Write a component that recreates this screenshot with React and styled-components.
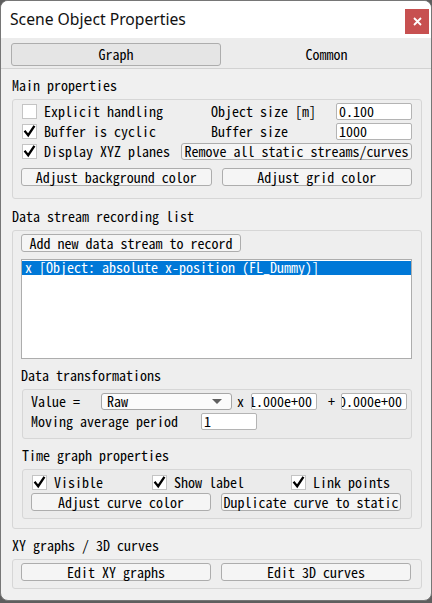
import React from "react";
import styled, { createGlobalStyle } from "styled-components";

const GlobalStyle = createGlobalStyle`
  html, body {
    margin: 0;
    padding: 0;
    background: #5e5e5e;
  }
  * {
    box-sizing: border-box;
  }
`;

const MONO = `"Noto Sans Mono CJK SC", "Liberation Mono", monospace`;

const Window = styled.div`
  width: 432px;
  height: 601px;
  border: 1px solid #767676;
  border-radius: 8px;
  overflow: hidden;
  background: #f0f0f0;
  display: flex;
  flex-direction: column;
  font-family: ${MONO};
  font-size: 14px;
  color: #000;
`;

const TitleBar = styled.div`
  height: 37px;
  background: #fff;
  display: flex;
  align-items: flex-start;
  justify-content: space-between;
  padding-left: 9px;
`;

const Title = styled.span`
  font-family: "Noto Sans", "Open Sans", sans-serif;
  font-size: 15.7px;
  line-height: 36px;
  color: #111;
`;

const CloseButton = styled.div`
  width: 24px;
  height: 25px;
  margin-top: 8px;
  margin-right: 2px;
  background: #c75050;
  display: flex;
  align-items: center;
  justify-content: center;
`;

const TabBar = styled.div`
  height: 31px;
  background: #ececec;
  border-bottom: 1px solid #d2d2d2;
  display: grid;
  grid-template-columns: 210px 1fr;
  gap: 1px;
  padding: 5px 0 2px 10px;
`;

const Tab = styled.div`
  height: 23px;
  line-height: 21px;
  text-align: center;
  border: 1px solid ${(p) => (p.$active ? "#adadad" : "transparent")};
  border-radius: 3px;
  background: ${(p) => (p.$active ? "#e5e5e5" : "transparent")};
`;

const Body = styled.div`
  flex: 1;
  padding: 0 9px 0 11px;
  display: flex;
  flex-direction: column;
`;

const SectionLabel = styled.div`
  height: 14px;
  line-height: 14px;
  margin-top: ${(p) => p.$top ?? 9}px;
  margin-bottom: 7px;
  margin-left: ${(p) => p.$indent ?? 0}px;
  white-space: pre;
`;

const Group = styled.div`
  border: 1px solid #d6d6d6;
  border-radius: 3px;
  background: ${(p) => (p.$nested ? "#ebebeb" : "rgba(0,0,0,0.008)")};
  padding: ${(p) => p.$pad};
  margin-left: ${(p) => p.$left ?? 0}px;
`;

const PropGrid = styled.div`
  display: grid;
  grid-template-columns: 160px 155px 76px;
  grid-auto-rows: 17px;
  row-gap: 3px;
`;

const CheckCell = styled.label`
  display: flex;
  align-items: center;
  gap: 7px;
  padding-left: 1px;
  white-space: pre;
  line-height: 17px;
`;

const Box = styled.span`
  width: 15px;
  height: 15px;
  flex: none;
  background: #fff;
  border: 1px solid #c4c4c4;
  display: flex;
  align-items: center;
  justify-content: center;
`;

const FieldLabel = styled.span`
  padding-left: ${(p) => p.$pad ?? 0}px;
  line-height: 17px;
  white-space: pre;
  width: ${(p) => (p.$width ? `${p.$width}px` : "auto")};
  flex: none;
`;

const Input = styled.div`
  height: 17px;
  width: ${(p) => (p.$width ? `${p.$width}px` : "auto")};
  background: #fff;
  border: 1px solid #b4b4b4;
  border-radius: 2px;
  padding-left: 2px;
  line-height: 15px;
  white-space: pre;
  overflow: ${(p) => (p.$clip ? "hidden" : "visible")};
  text-indent: ${(p) => p.$indent ?? 0}px;
  flex: none;
`;

const Button = styled.div`
  height: ${(p) => p.$h ?? 18}px;
  width: ${(p) => (p.$width ? `${p.$width}px` : "auto")};
  grid-column: ${(p) => p.$span ?? "auto"};
  background: #f5f5f5;
  border: 1px solid #adadad;
  border-radius: 3px;
  text-align: center;
  line-height: ${(p) => (p.$h ?? 18) - 2}px;
  white-space: pre;
`;

const ButtonPair = styled.div`
  display: grid;
  grid-template-columns: ${(p) => p.$cols ?? "1fr 1fr"};
  column-gap: 10px;
  margin-top: ${(p) => p.$top ?? 0}px;
`;

const List = styled.div`
  margin-top: 7px;
  height: 100px;
  background: #fff;
  border: 1px solid #adadad;
  padding-top: 1px;
`;

const ListRow = styled.div`
  height: 14px;
  line-height: 12px;
  padding-left: 3px;
  background: ${(p) => (p.$selected ? "#0078d7" : "transparent")};
  color: ${(p) => (p.$selected ? "#fff" : "#000")};
  white-space: pre;
`;

const Row = styled.div`
  display: flex;
  align-items: center;
  height: 17px;
  margin-top: ${(p) => p.$top ?? 0}px;
`;

const Combo = styled.div`
  width: 131px;
  height: 17px;
  border: 1px solid #a6a6a6;
  border-radius: 3px;
  background: #fbfbfb;
  display: flex;
  align-items: center;
  justify-content: space-between;
  padding: 0 9px 0 5px;
  line-height: 15px;
  flex: none;
`;

const Arrow = styled.span`
  width: 0;
  height: 0;
  border-left: 5px solid transparent;
  border-right: 5px solid transparent;
  border-top: 5px solid #5f5f5f;
`;

const CheckRow = styled.div`
  display: grid;
  grid-template-columns: 120px 139px 1fr;
  height: 17px;
`;

const Check = () => (
  <svg width="13" height="13" viewBox="0 0 13 13">
    <path d="M2.3 6.6 L5.2 10.2 L10.8 1.8" fill="none" stroke="#000" strokeWidth="2.3" strokeLinecap="square" />
  </svg>
);

const CheckBox = ({ checked, label }) => (
  <CheckCell>
    <Box>{checked && <Check />}</Box>
    {label}
  </CheckCell>
);

export default function App() {
  return (
    <>
      <GlobalStyle />
      <Window>
        <TitleBar>
          <Title>Scene Object Properties</Title>
          <CloseButton>
            <svg width="9" height="9" viewBox="0 0 9 9">
              <path d="M1 1 L8 8 M8 1 L1 8" stroke="#fff" strokeWidth="1.8" />
            </svg>
          </CloseButton>
        </TitleBar>
        <TabBar>
          <Tab $active>Graph</Tab>
          <Tab>Common</Tab>
        </TabBar>
        <Body>
          <SectionLabel>Main properties</SectionLabel>
          <Group $pad="3px 9px 12px 8px">
            <PropGrid>
              <CheckBox label="Explicit handling" />
              <FieldLabel $pad={30}>Object size [m]</FieldLabel>
              <Input>0.100</Input>
              <CheckBox checked label="Buffer is cyclic" />
              <FieldLabel $pad={30}>Buffer size</FieldLabel>
              <Input>1000</Input>
              <CheckBox checked label="Display XYZ planes" />
              <Button $span="2 / 4" $h={17}>Remove all static streams/curves</Button>
            </PropGrid>
            <ButtonPair $top={8}>
              <Button>Adjust background color</Button>
              <Button>Adjust grid color</Button>
            </ButtonPair>
          </Group>

          <SectionLabel $top={10}>Data stream recording list</SectionLabel>
          <Group $pad="3px 9px 9px 8px">
            <Button $width={220}>Add new data stream to record</Button>
            <List>
              <ListRow $selected>x [Object: absolute x-position (FL_Dummy)]</ListRow>
            </List>

            <SectionLabel $top={9}>Data transformations</SectionLabel>
            <Group $nested $left={1} $pad="3px 4px 8px 8px">
              <Row>
                <FieldLabel $width={70}>Value =</FieldLabel>
                <Combo>
                  Raw
                  <Arrow />
                </Combo>
                <FieldLabel $width={19} $pad={5}>x</FieldLabel>
                <Input $width={66} $indent={-5} $clip>1.000e+00</Input>
                <FieldLabel $width={24} $pad={11}>+</FieldLabel>
                <Input $width={66} $indent={-5} $clip>0.000e+00</Input>
              </Row>
              <Row $top={3}>
                <FieldLabel $width={170}>Moving average period</FieldLabel>
                <Input $width={56}>1</Input>
              </Row>
            </Group>

            <SectionLabel $top={9} $indent={1}>Time graph properties</SectionLabel>
            <Group $nested $left={1} $pad="4px 4px 7px 8px">
              <CheckRow>
                <CheckBox checked label="Visible" />
                <CheckBox checked label="Show label" />
                <CheckBox checked label="Link points" />
              </CheckRow>
              <ButtonPair $cols="180px 180px" $top={2}>
                <Button>Adjust curve color</Button>
                <Button>Duplicate curve to static</Button>
              </ButtonPair>
            </Group>
          </Group>

          <SectionLabel>XY graphs / 3D curves</SectionLabel>
          <Group $pad="3px 10px 7px 8px">
            <ButtonPair>
              <Button>Edit XY graphs</Button>
              <Button>Edit 3D curves</Button>
            </ButtonPair>
          </Group>
        </Body>
      </Window>
    </>
  );
}
